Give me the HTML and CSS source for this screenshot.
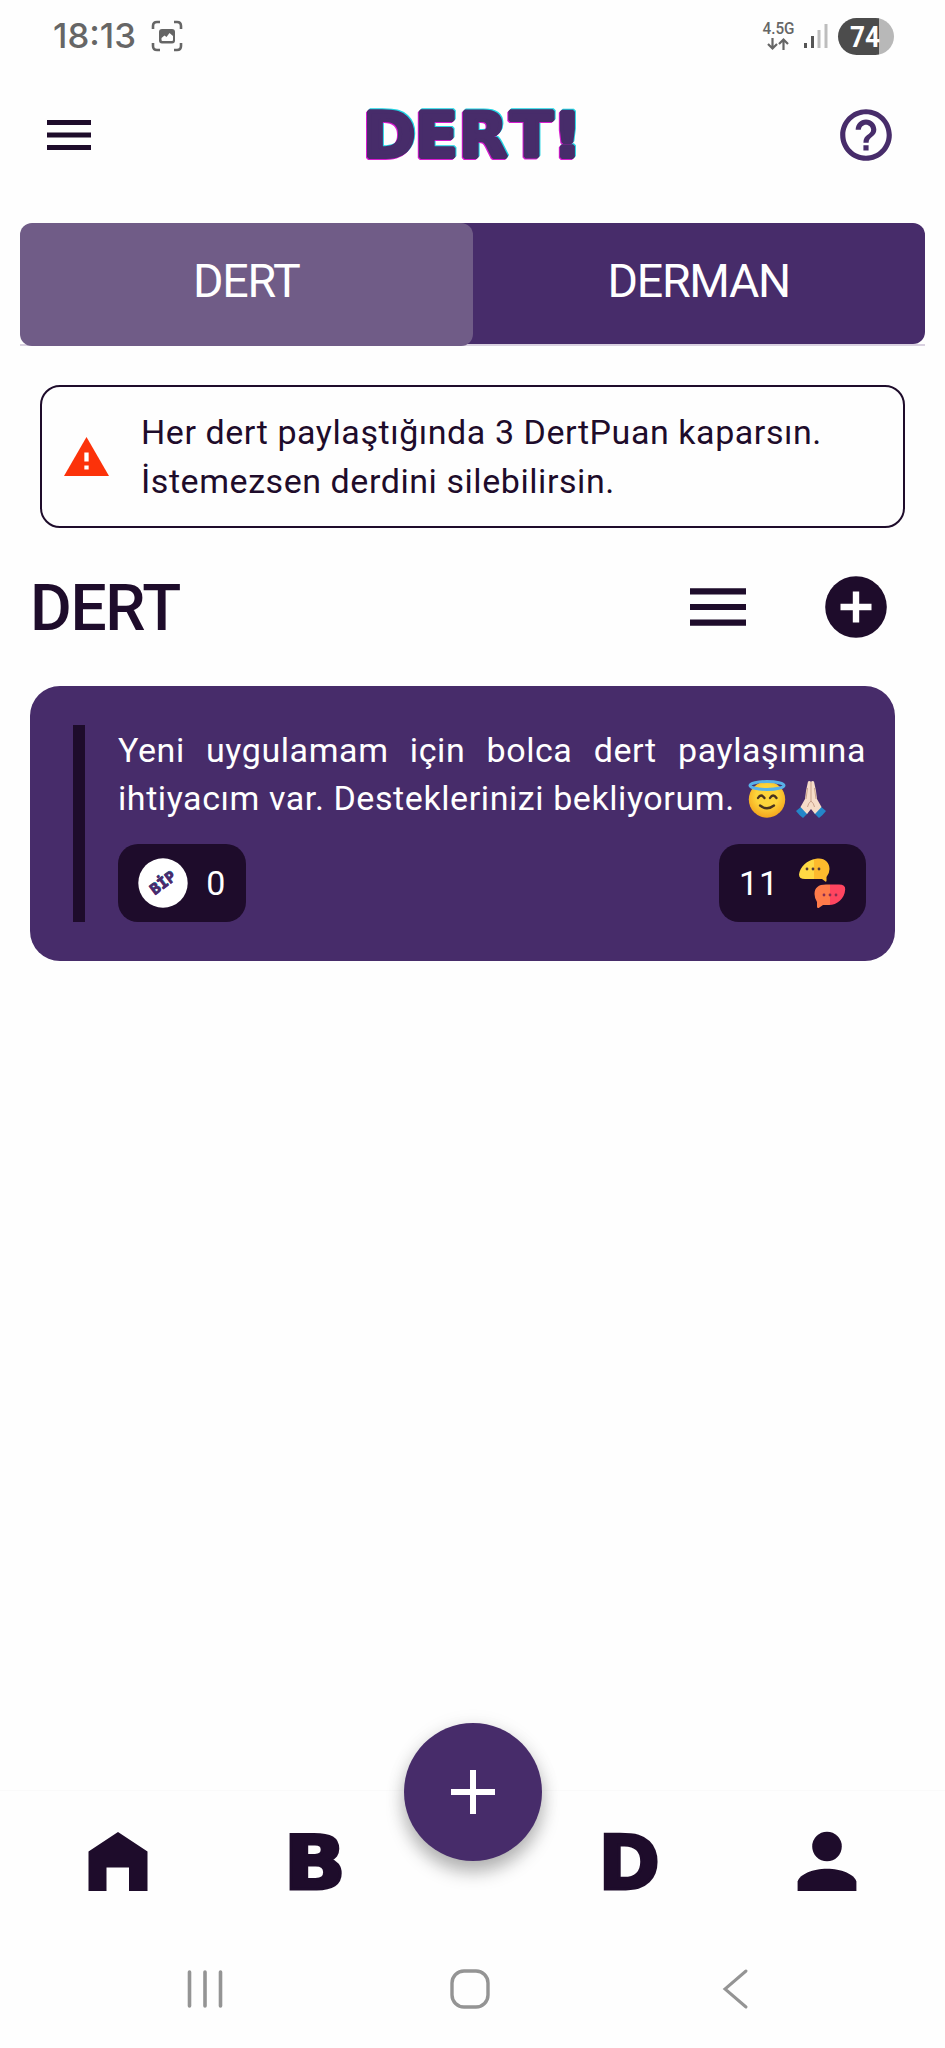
FILE: index.html
```html
<!DOCTYPE html>
<html lang="tr">
<head>
<meta charset="utf-8">
<title>DERT!</title>
<link rel="stylesheet" href="styles.css">
</head>
<body>
<div class="screen">
  <div class="status">
    <svg class="time" width="100" height="40" viewBox="0 0 100 40"><text x="1" y="33" textLength="83" lengthAdjust="spacingAndGlyphs">18:13</text></svg>
    <svg class="capture" width="32" height="32" viewBox="0 0 32 32">
      <path d="M2 9V6q0-4 4-4h3M23 2h3q4 0 4 4v3M30 23v3q0 4-4 4h-3M9 30H6q-4 0-4-4v-3" fill="none" stroke="#666" stroke-width="2.6"/>
      <rect x="8" y="9" width="16" height="14.500" rx="3" fill="#666"/>
      <path d="M10.500 20v-2l3-2.500 2 1.500 3-4 3.500 3v4q0 1-1 1h-9.500q-1 0-1-1z" fill="#fff"/>
    </svg>
    <div class="status-right">
      <svg width="34" height="32" viewBox="0 0 34 32">
        <text class="net" x="0.500" y="13.500" textLength="32" lengthAdjust="spacingAndGlyphs">4.5G</text>
        <path d="M10.500 18v10.500M6 24l4.500 4.500L15 24M21.500 30V19.500M17 24l4.500-4.500L26 24" fill="none" stroke="#666" stroke-width="2.200"/>
      </svg>
      <svg class="signal" width="24" height="26" viewBox="0 0 24 26">
        <path d="M1.500 20v5M8.500 13v12" stroke="#555" stroke-width="3"/><path d="M15 7v18M22 1v24" stroke="#bdbdbd" stroke-width="3"/>
      </svg>
      <div class="battery"><svg width="56" height="37" viewBox="0 0 56 37"><text x="12" y="28.500" textLength="30" lengthAdjust="spacingAndGlyphs">74</text></svg></div>
    </div>
  </div>

  <header class="header">
    <svg width="44" height="30" viewBox="0 0 44 30"><path d="M0 2.500h44M0 15h44M0 27.500h44" stroke="#1e0c2b" stroke-width="5"/></svg>
    <svg class="logo" width="220" height="62" viewBox="0 0 220 62">
      <g class="logo-cyan"><text x="0.200 52 96 147 190" y="52">DERT!</text></g>
      <g class="logo-pink" aria-hidden="true"><text x="-1.800 50 94 145 188" y="54">DERT!</text></g>
      <g class="logo-main" aria-hidden="true"><text x="-0.800 51 95 146 189" y="53">DERT!</text></g>
    </svg>
    <svg width="62" height="62" viewBox="0 0 24 24" fill="#472c6a"><path d="M11 18h2v-2h-2v2zm1-16C6.480 2 2 6.480 2 12s4.480 10 10 10 10-4.480 10-10S17.520 2 12 2zm0 18c-4.410 0-8-3.590-8-8s3.590-8 8-8 8 3.590 8 8-3.590 8-8 8zm0-14c-2.210 0-4 1.790-4 4h2c0-1.100.9-2 2-2s2 .9 2 2c0 2-3 1.750-3 5h2c0-2.250 3-2.500 3-5 0-2.210-1.790-4-4-4z"/></svg>
  </header>

  <nav class="tabs"><div class="tab tab-on">DERT</div><div class="tab">DERMAN</div></nav>

  <section class="notice">
    <svg width="45" height="39" viewBox="0 0 45 39"><path d="M22.500 0L45 39H0z" fill="#fc320a"/><path d="M22.500 15.500v9M22.500 28.500v4" stroke="#fff" stroke-width="4.300"/></svg>
    <p>Her dert paylaştığında 3 DertPuan kaparsın.<br>İstemezsen derdini silebilirsin.</p>
  </section>

  <div class="title-row">
    <h1>DERT</h1>
    <svg width="56" height="38" viewBox="0 0 56 38"><path d="M0 3.300h56M0 19h56M0 34.700h56" stroke="#1e0c2b" stroke-width="6.200"/></svg>
    <svg class="add" width="62" height="62" viewBox="0 0 62 62"><circle cx="31" cy="31" r="30.800" fill="#1e0c2b"/><path d="M31 15.500v31M15.500 31h31" stroke="#fff" stroke-width="6.400"/></svg>
  </div>

  <article class="card">
    <div class="bar"></div>
    <div class="card-body">
      <p class="line first">Yeni uygulamam için bolca dert paylaşımına</p>
      <div class="line second"><span>ihtiyacım var. Desteklerinizi bekliyorum.</span>
        <svg class="angel" width="38" height="38" viewBox="0 0 38 38" role="img" aria-label="😇">
          <defs><radialGradient id="face" cx=".5" cy=".4" r=".6"><stop offset=".5" stop-color="#fdd43a"/><stop offset="1" stop-color="#f4a51d"/></radialGradient></defs>
          <circle cx="19" cy="19.500" r="18.200" fill="url(#face)"/>
          <ellipse cx="19" cy="5.500" rx="17" ry="4" fill="none" stroke="#58b1e8" stroke-width="3"/>
          <path d="M10 18q3-5 6.500 0M22 18q3-5 6.500 0" fill="none" stroke="#49331e" stroke-width="2.300" stroke-linecap="round"/>
          <path d="M12 25.500q7 5.500 14 0" fill="none" stroke="#49331e" stroke-width="2.300" stroke-linecap="round"/>
        </svg>
        <svg class="pray" width="32" height="38" viewBox="0 0 32 38" role="img" aria-label="🙏">
          <path d="M1 31l6-5 6 7-5 5q-4-3-7-7zM31 31l-6-5-6 7 5 5q4-3 7-7z" fill="#2486c8"/>
          <path d="M13 1.500q2-1 3 .5 1-1.500 3-.5l2 9.500 1 8 4.500 8-6.500 7-4-5-4 5-6.500-7 4.500-8 1-8z" fill="#f6dcc8"/>
          <path d="M16 2v19M16 21q-3 2.500-3.500 6M16 21q3 2.500 3.500 6M12.500 8l-1.500 11M19.500 8l1.500 11" fill="none" stroke="#c9a18b" stroke-width="1"/>
        </svg>
      </div>
      <div class="pills">
        <div class="pill pill-left">
          <svg width="50" height="50" viewBox="0 0 50 50"><circle cx="25" cy="25" r="24.700" fill="#fff"/><g transform="rotate(-37 25 25)"><text class="bip bip-cyan" x="11.500" y="29.500" textLength="28" lengthAdjust="spacingAndGlyphs">BİP</text><text class="bip bip-pink" x="10.700" y="30.300" textLength="28" lengthAdjust="spacingAndGlyphs" aria-hidden="true">BİP</text><text class="bip bip-main" x="11" y="30" textLength="28" lengthAdjust="spacingAndGlyphs" aria-hidden="true">BİP</text></g></svg>
          <span>0</span>
        </div>
        <div class="pill pill-right">
          <span>11</span>
          <svg width="48" height="50" viewBox="0 0 48 50">
            <defs>
              <linearGradient id="yellow"><stop offset=".5" stop-color="#ffd944"/><stop offset=".5" stop-color="#fdba2d"/></linearGradient>
              <linearGradient id="red"><stop offset=".5" stop-color="#ff7b4a"/><stop offset=".5" stop-color="#ff4560"/></linearGradient>
            </defs>
            <path d="M18 .8C26-.7 31.500 4 31.500 11q0 4.500-3 8V23q-.5 1.500-1.800 0L24 21H7Q1 21 1 16.500C2 9 9 2 18 .8z" fill="url(#yellow)"/>
            <path d="M28 26.500h13q6.500 0 6.200 5C46.500 41 39 47 31 47h-6l-4.300 3q-1.700.5-1.700-1.500V44q-2.500-4-2.500-8 0-9.500 11.500-9.500z" fill="url(#red)"/>
            <g fill="#553a38"><circle cx="9" cy="11" r="1.400"/><circle cx="15" cy="11" r="1.400"/><circle cx="21" cy="11" r="1.400"/></g>
            <g fill="#8a2f51"><circle cx="26" cy="37" r="1.400"/><circle cx="32" cy="37" r="1.400"/><circle cx="38" cy="37" r="1.400"/></g>
          </svg>
        </div>
      </div>
    </div>
  </article>

  <footer class="bottom">
    <button class="fab" aria-label="Ekle"><svg width="44" height="44" viewBox="0 0 44 44"><path d="M22 0v44M0 22h44" stroke="#fff" stroke-width="6"/></svg></button>
    <div class="nav">
      <svg width="60" height="60" viewBox="0 0 60 60"><path d="M30 1L59.500 20.500V60H41V36.500H18.500V60H.5V20.500z" fill="#1e0c2b"/></svg>
      <svg class="letter" width="60" height="60" viewBox="0 0 60 60"><text transform="scale(1.100 1)" x="-2" y="58">B</text></svg>
      <svg class="letter letter-d" width="60" height="60" viewBox="0 0 60 60"><text x="-0.500" y="58">D</text></svg>
      <svg width="60" height="60" viewBox="0 0 60 60"><circle cx="30" cy="15.500" r="14.800" fill="#1e0c2b"/><path d="M.6 60V50.500C3 43 16 37.800 30 37.800S57 43 59.400 50.500V60z" fill="#1e0c2b"/></svg>
    </div>
    <div class="system">
      <svg width="36" height="38" viewBox="0 0 36 38"><path d="M2.500 2v34M18 2v34M33.500 2v34" stroke="#949494" stroke-width="3.600" stroke-linecap="round"/></svg>
      <svg class="home" width="40" height="40" viewBox="0 0 40 40"><rect x="2" y="2" width="36" height="36" rx="12" fill="none" stroke="#949494" stroke-width="3.400"/></svg>
      <svg width="26" height="40" viewBox="0 0 26 40"><path d="M24 2L3 20l21 18" fill="none" stroke="#949494" stroke-width="3" stroke-linecap="round"/></svg>
    </div>
  </footer>
</div>
</body>
</html>
```
FILE: styles.css
```css
* { box-sizing: border-box; }
body { margin: 0; background: #fefefe; font-family: Roboto, "Noto Sans", sans-serif; color: #1e0c2b; }
p, h1 { margin: 0; }
svg { display: block; flex: none; overflow: visible; }
.screen { width: 945px; height: 2048px; display: flex; flex-direction: column; }

.status { height: 72px; padding: 0 51px 0 52px; display: flex; align-items: center; }
.time { font: 500 34.500px Inter, sans-serif; fill: #666; margin-top: -2px; }
.capture { margin: 0 0 0 -1px; }
.status-right { margin-left: auto; display: flex; align-items: center; }
.net { font: 500 16px Roboto, sans-serif; fill: #666; }
.signal { margin: 0 10px 0 8px; }
.battery { width: 56px; height: 37px; border-radius: 19px; background: linear-gradient(90deg, #4c4c4c 74%, #b8b8b8 74%); }
.battery text { font: 700 29px Roboto, sans-serif; fill: #fff; }

.header { height: 151px; padding: 0 48px 25px 47px; display: flex; align-items: center; justify-content: space-between; }
.logo { margin-left: 22px; font: bold 63px "DejaVu Sans", sans-serif; stroke-width: 4; stroke-linejoin: bevel; }
.logo-cyan { fill: #20d5e3; stroke: #20d5e3; }
.logo-pink { fill: #d619cf; stroke: #d619cf; }
.logo-main { fill: #472c6a; stroke: #472c6a; }

.tabs { margin: 0 20px; height: 123px; flex: none; display: flex; background: linear-gradient(#472c6a, #472c6a) 435px 0 / 30px 121px no-repeat, linear-gradient(#d9d1e0, #d9d1e0) 0 121px / 100% 2px no-repeat; }
.tab { flex: 1; height: 121px; padding-bottom: 5px; display: flex; align-items: center; justify-content: center; font-size: 46.500px; letter-spacing: -1.300px; color: #fff; background: #472c6a; border-radius: 0 12px 12px 0; }
.tab-on { height: 123px; padding-bottom: 7px; background: #705c87; border-radius: 12px; }

.notice { margin: 39px 40px 0; height: 143px; flex: none; padding-left: 22px; display: flex; align-items: center; border: 2px solid #1e0c2b; border-radius: 20px; }
.notice p { margin-left: 32px; font-size: 34px; line-height: 49px; letter-spacing: .56px; white-space: nowrap; }

.title-row { height: 158px; flex: none; padding: 0 58px 0 30px; display: flex; align-items: center; }
.title-row h1 { margin: 2px auto 0 0; font-size: 64px; font-weight: 500; letter-spacing: -1.300px; }
.add { margin-left: 79px; }

.card { margin: 0 50px 0 30px; height: 275px; flex: none; padding: 39px 29px 39px 43px; display: flex; border-radius: 30px; background: #472c6a; color: #fff; }
.bar { width: 12px; background: #1e0c2b; }
.card-body { flex: 1; margin-left: 33px; font-size: 34px; letter-spacing: .58px; }
.line { height: 49px; line-height: 51px; white-space: nowrap; }
.first { text-align-last: justify; }
.second { display: flex; align-items: center; }
.angel { margin-left: 13px; }
.pray { margin-left: 9px; }
.pills { margin-top: 21px; display: flex; justify-content: space-between; }
.pill { height: 78px; display: flex; align-items: center; justify-content: space-between; border-radius: 20px; background: #1e0c2b; }
.pill-left { width: 128px; padding: 0 20px; }
.pill-right { width: 147px; padding: 0 20px; letter-spacing: 1px; }
.bip { font: bold 15px "DejaVu Sans Mono", monospace; letter-spacing: 0; }
.bip-cyan { fill: #20c9dc; }
.bip-pink { fill: #c032c0; }
.bip-main { fill: #472c6a; stroke: #472c6a; stroke-width: .6; }

.bottom { margin-top: auto; height: 258px; flex: none; position: relative; border-top: 1px solid #fafafa; }
.fab { position: absolute; left: 403.500px; top: -68px; width: 138px; height: 138px; padding: 0; display: flex; align-items: center; justify-content: center; border: 0; border-radius: 50%; background: #472c6a; box-shadow: 0 11px 18px rgba(0, 0, 0, .28), 0 2px 20px rgba(0, 0, 0, .08); }
.nav { height: 140px; padding: 40px 88px 0; display: flex; justify-content: space-between; }
.letter { margin-right: 57px; font: bold 74px "DejaVu Sans", sans-serif; fill: #1e0c2b; stroke: #1e0c2b; stroke-width: 3; }
.letter-d { margin: 0 0 0 57px; }
.system { padding: 38px 197px 0 187px; display: flex; align-items: center; justify-content: space-between; }
.home { margin-right: 5px; }
```
